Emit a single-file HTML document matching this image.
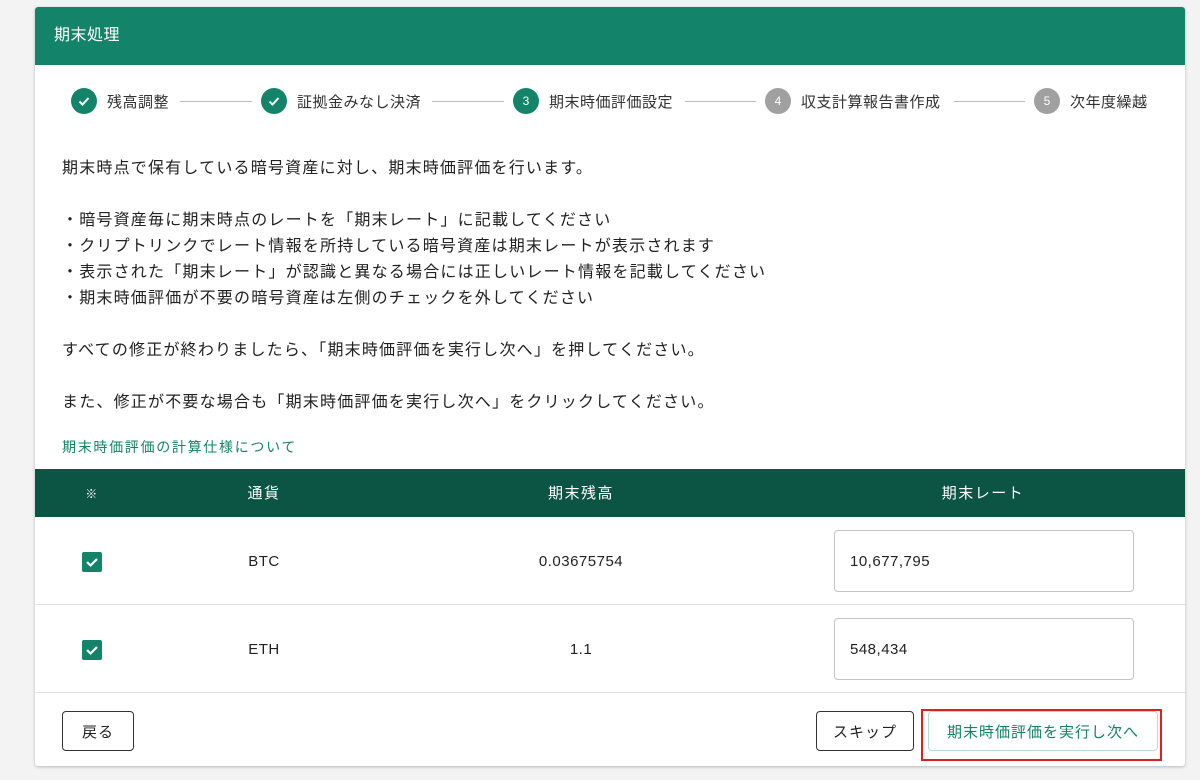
<!DOCTYPE html>
<html><head><meta charset="utf-8"><style>
*{box-sizing:border-box;margin:0;padding:0}
body{width:1200px;height:780px;background:#f3f3f3;font-family:"Liberation Sans","Noto Sans CJK JP",sans-serif;color:#222;position:relative;overflow:hidden}
.card{position:absolute;left:35px;top:7px;width:1150px;height:759px;background:#fff;border-radius:3px;box-shadow:0 1px 3px rgba(0,0,0,.25);overflow:hidden}
.hdr{height:58px;background:#13846a;color:#fff;font-size:16px;line-height:58px;padding-left:19px;letter-spacing:.5px}
.step{position:absolute;top:81px;height:26px;display:flex;align-items:center;font-size:15px;color:#333;letter-spacing:.5px}
.c{width:26px;height:26px;border-radius:50%;display:inline-flex;align-items:center;justify-content:center;color:#fff;font-size:12px;margin-right:10px;letter-spacing:0}
.g{background:#13846a}.gr{background:#a0a0a0}
.line{position:absolute;top:94px;height:1px;background:#bbb}
.txt{position:absolute;left:27px;top:149px;font-size:16px;letter-spacing:1.2px;line-height:26px;color:#222}
.link{position:absolute;left:27px;top:430px;font-size:14px;letter-spacing:1.7px;color:#13846a}
.th{position:absolute;top:462px;left:0;width:1150px;height:48px;background:#0c5443;color:#fff;font-size:15px;letter-spacing:1.5px}
.th span,.row span{position:absolute;transform:translateX(-50%);top:50%;margin-top:-9px;line-height:20px}
.row{position:absolute;left:0;width:1150px;height:88px;border-bottom:1px solid #e0e0e0;font-size:15px;letter-spacing:.5px}
.cb{position:absolute;left:47px;top:35px;width:20px;height:20px;background:#13846a;border-radius:2px}
.inp{position:absolute;left:799px;top:13px;width:300px;height:62px;border:1px solid #c4c4c4;border-radius:4px;padding-left:15px;line-height:62px;font-size:15px}
.btn{position:absolute;height:40px;border-radius:4px;font-size:15px;display:flex;align-items:center;justify-content:center;letter-spacing:1px}
</style></head><body>
<div class="card">
<div class="hdr">期末処理</div>
<div class="step" style="left:36px"><span class="c g"><svg width="14" height="14"><path d="M2.5 7.5l3 3L11.5 4" stroke="#fff" stroke-width="2" fill="none"/></svg></span>残高調整</div>
<div class="line" style="left:145px;width:72px"></div>
<div class="step" style="left:226px"><span class="c g"><svg width="14" height="14"><path d="M2.5 7.5l3 3L11.5 4" stroke="#fff" stroke-width="2" fill="none"/></svg></span>証拠金みなし決済</div>
<div class="line" style="left:397px;width:72px"></div>
<div class="step" style="left:478px"><span class="c g">3</span>期末時価評価設定</div>
<div class="line" style="left:650px;width:71px"></div>
<div class="step" style="left:730px"><span class="c gr">4</span>収支計算報告書作成</div>
<div class="line" style="left:919px;width:71px"></div>
<div class="step" style="left:999px"><span class="c gr">5</span>次年度繰越</div>
<div class="txt">期末時点で保有している暗号資産に対し、期末時価評価を行います。<br><br>・暗号資産毎に期末時点のレートを「期末レート」に記載してください<br>・クリプトリンクでレート情報を所持している暗号資産は期末レートが表示されます<br>・表示された「期末レート」が認識と異なる場合には正しいレート情報を記載してください<br>・期末時価評価が不要の暗号資産は左側のチェックを外してください<br><br>すべての修正が終わりましたら、「期末時価評価を実行し次へ」を押してください。<br><br>また、修正が不要な場合も「期末時価評価を実行し次へ」をクリックしてください。</div>
<div class="link">期末時価評価の計算仕様について</div>
<div class="th"><span style="left:57px;font-size:12px">※</span><span style="left:229px">通貨</span><span style="left:546px">期末残高</span><span style="left:948px">期末レート</span></div>
<div class="row" style="top:510px"><div class="cb"><svg width="20" height="20"><path d="M5 10l3.5 3.5L15 7" stroke="#fff" stroke-width="2.2" fill="none"/></svg></div><span style="left:229px">BTC</span><span style="left:546px">0.03675754</span><div class="inp">10,677,795</div></div>
<div class="row" style="top:598px"><div class="cb"><svg width="20" height="20"><path d="M5 10l3.5 3.5L15 7" stroke="#fff" stroke-width="2.2" fill="none"/></svg></div><span style="left:229px">ETH</span><span style="left:546px">1.1</span><div class="inp">548,434</div></div>
<div class="btn" style="left:27px;top:704px;width:72px;border:1px solid #333">戻る</div>
<div class="btn" style="left:781px;top:704px;width:98px;border:1px solid #333">スキップ</div>
<div class="btn" style="left:893px;top:704px;width:230px;border:1px solid #b9dcd2;color:#13846a">期末時価評価を実行し次へ</div>
</div>
<svg style="position:absolute;left:0;top:0;z-index:5" width="1200" height="780"><rect x="922" y="710" width="239" height="50" fill="none" stroke="#e02020" stroke-width="2"/></svg>
</body></html>
